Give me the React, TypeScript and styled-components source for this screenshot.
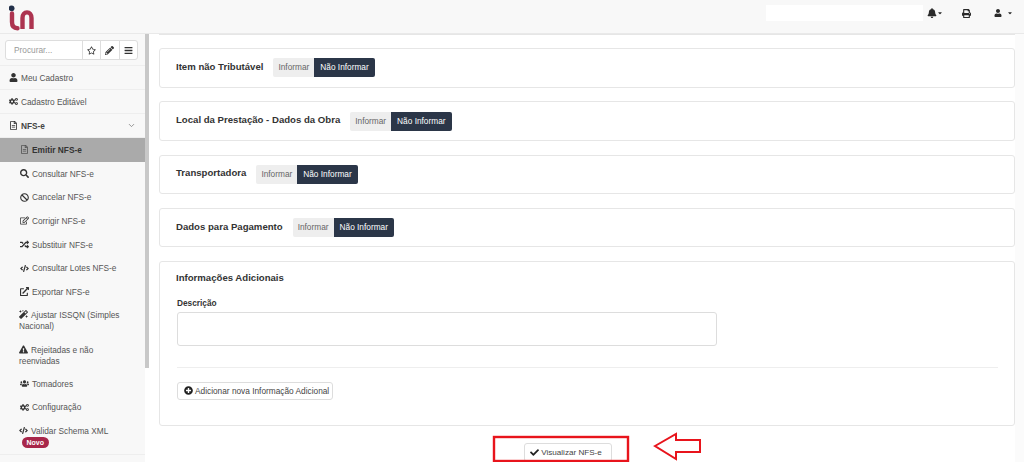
import React from "react";
import styled, { createGlobalStyle } from "styled-components";
import {
  FaUser, FaCogs, FaRegFileAlt, FaSearch, FaBan, FaRegEdit, FaRandom, FaCode,
  FaExternalLinkAlt, FaMagic, FaExclamationTriangle, FaUsers, FaBell, FaPrint,
  FaCaretDown, FaCheck, FaPlusCircle, FaRegStar, FaPencilAlt, FaBars,
} from "react-icons/fa";
import { ChevronDown } from "lucide-react";

const Global = createGlobalStyle`
  html, body { margin: 0; padding: 0; height: 462px; overflow: hidden; background: #fff; }
  body { font-family: "Liberation Sans", Arial, sans-serif; color: #333; }
  * { box-sizing: border-box; }
`;

const Page = styled.div`
  width: 1024px; height: 462px; display: flex; flex-direction: column; overflow: hidden; position: relative;
`;
const Header = styled.header`
  height: 34px; flex: none; background: #f8f8f8; border-bottom: 1px solid #e9e9e9;
  display: flex; align-items: flex-start; padding: 5px 0 0 9px;
`;
const Logo = styled.svg`
  width: 27px; height: 26px; flex: none;
`;
const HeaderRight = styled.div`
  margin-left: auto; display: flex; align-items: center; height: 16px;
`;
const HeaderInput = styled.div`
  width: 157px; height: 16px; background: #fff; margin-right: 4px;
`;
const TopIcon = styled.span<{ $w: number; $gap?: number }>`
  width: ${(p) => p.$w}px; display: flex; align-items: center; gap: ${(p) => p.$gap ?? 0}px; color: #2a2a2a;
`;
const Body = styled.div`
  flex: 1; display: flex; min-height: 0;
`;
const Sidebar = styled.aside`
  width: 145px; flex: none; background: #f8f8f8; height: 100%;
`;
const SearchRow = styled.div`
  height: 32px; padding: 6px 6px 0 5px; display: flex; border-bottom: 1px solid #eee;
`;
const SearchGroup = styled.div`
  display: flex; height: 20px; width: 133px; background: #fff; border: 1px solid #ddd; border-radius: 3px;
`;
const SearchInput = styled.div`
  width: 77px; padding-left: 8px; font-size: 8.3px; line-height: 18px; color: #999; border-right: 1px solid #ddd;
`;
const SearchButton = styled.div`
  flex: 1; display: flex; align-items: center; justify-content: center; color: #333; font-size: 9px;
  & + & { border-left: 1px solid #ddd; }
`;
const Item = styled.div`
  height: 24px; padding-left: 9px; display: flex; align-items: center; gap: 3px;
  font-size: 8.3px; color: #555; border-bottom: 1px solid #eee;
  svg { font-size: 9px; color: #333; flex: none; }
`;
const SectionLabel = styled.span`
  font-weight: 700; color: #444;
`;
const Caret = styled.span`
  margin-left: auto; margin-right: 9px; display: flex; svg { color: #777; }
`;
const SubItem = styled.div<{ $active?: boolean }>`
  height: 23.7px; padding-left: 20px; display: flex; align-items: center; gap: 3px;
  font-size: 8.3px; color: ${(p) => (p.$active ? "#333" : "#555")};
  font-weight: ${(p) => (p.$active ? 700 : 400)};
  background: ${(p) => (p.$active ? "#aaaaaa" : "transparent")};
  svg { font-size: 9px; color: ${(p) => (p.$active ? "#555" : "#333")}; flex: none; }
`;
const MultiItem = styled.div<{ $h: number; $top?: number; $last?: boolean }>`
  height: ${(p) => p.$h}px; padding: ${(p) => p.$top ?? 0}px 8px 0 19px; display: flex; flex-direction: column; justify-content: center;
  font-size: 8.3px; line-height: 11.6px; color: #555;
  border-bottom: ${(p) => (p.$last ? "1px solid #eee" : "0")};
  svg { font-size: 9px; color: #333; vertical-align: -1px; margin-right: 3px; }
`;
const Badge = styled.span`
  align-self: flex-start; margin-left: 3px; height: 11px; padding: 0 4.5px; border-radius: 5.5px; background: #a8274a;
  color: #fff; font-size: 7px; font-weight: 700; line-height: 11px;
`;
const ScrollTrack = styled.div`
  width: 4px; flex: none; height: 100%; background: #fff;
`;
const ScrollThumb = styled.div`
  width: 4px; height: 334px; background: #c8c8c8;
`;
const Main = styled.main`
  flex: 1; min-width: 0; display: flex; padding-left: 10px; height: 100%;
`;
const Column = styled.div`
  width: 856px; flex: none; display: flex; flex-direction: column;
`;
const Gutter = styled.div`
  flex: 1; background: #fbfbfb;
`;
const TopStub = styled.div`
  height: 1px; background: #e6e6e6; margin-bottom: 13px;
`;
const Card = styled.section`
  height: 39.5px; flex: none; border: 1px solid #e6e6e6; border-radius: 3px; background: #fff; margin-bottom: 13.83px;
  padding: 0 16px; display: flex; align-items: center; gap: 10px;
`;
const CardTitle = styled.h3`
  margin: 0 0 3px; font-size: 9.6px; font-weight: 700; color: #333;
`;
const Toggle = styled.div`
  display: flex; height: 19px; font-size: 8.3px; line-height: 19px;
`;
const ToggleOff = styled.span`
  padding: 0 5px; background: #eeeeee; color: #666; border-radius: 2px 0 0 2px;
`;
const ToggleOn = styled.span`
  padding: 0 6px; background: #2b3648; color: #fff; border-radius: 0 2px 2px 0;
`;
const BigCard = styled.section`
  height: 165px; flex: none; border: 1px solid #e6e6e6; border-radius: 3px; background: #fff; padding: 10px 16px 0 17px;
`;
const BigTitle = styled.h3`
  margin: 0 0 0 -1px; font-size: 9.6px; line-height: 12px; font-weight: 700; color: #333;
`;
const FieldLabel = styled.label`
  display: block; margin-top: 14px; font-size: 8.3px; line-height: 10px; font-weight: 700; color: #333;
`;
const TextArea = styled.div`
  margin-top: 4px; width: 540px; height: 34px; border: 1px solid #ddd; border-radius: 3px; background: #fff;
`;
const Divider = styled.hr`
  margin: 21px 0 13px; border: 0; border-top: 1px solid #eee;
`;
const OutlineButton = styled.button`
  display: inline-flex; align-items: center; gap: 2px; height: 18px; padding: 0 3px 0 6px; margin: 0;
  background: #fff; border: 1px solid #ddd; border-radius: 3px; color: #444; font: 8.3px "Liberation Sans", Arial, sans-serif;
  svg { font-size: 9px; color: #222; }
`;
const SubmitButton = styled(OutlineButton)`
  height: 19px; font-size: 8.1px; padding: 0 9px 0 5px;
`;
const Footer = styled.div`
  display: flex; justify-content: center; padding: 16.7px 38px 0 0;
`;
const Highlight = styled.svg`
  position: absolute; left: 0; top: 0; pointer-events: none;
`;

const subs = [
  { icon: <FaSearch />, label: "Consultar NFS-e" },
  { icon: <FaBan />, label: "Cancelar NFS-e" },
  { icon: <FaRegEdit />, label: "Corrigir NFS-e" },
  { icon: <FaRandom />, label: "Substituir NFS-e" },
  { icon: <FaCode />, label: "Consultar Lotes NFS-e" },
  { icon: <FaExternalLinkAlt />, label: "Exportar NFS-e" },
];
const sections = ["Item não Tributável", "Local da Prestação - Dados da Obra", "Transportadora", "Dados para Pagamento"];

export default function App() {
  return (
    <Page>
      <Global />
      <Header>
        <Logo viewBox="0 0 27 26">
          <circle cx="2.6" cy="3.3" r="2.9" fill="#22304a" />
          <path d="M3 8.5v8.5c0 4 2 6.2 5.5 6.2" fill="none" stroke="#ad3450" strokeWidth="4.4" strokeLinecap="round" />
          <path d="M13.5 24V13c0-3.2 2-5.6 4.5-5.6s4.5 2.4 4.5 5.6v11" fill="none" stroke="#ad3450" strokeWidth="4.4" />
        </Logo>
        <HeaderRight>
          <HeaderInput />
          <TopIcon $w={35}><FaBell size={10} /><FaCaretDown size={6} /></TopIcon>
          <TopIcon $w={32}><FaPrint size={9} /></TopIcon>
          <TopIcon $w={30} $gap={5}><FaUser size={8} /><FaCaretDown size={6} /></TopIcon>
        </HeaderRight>
      </Header>
      <Body>
        <Sidebar>
          <SearchRow>
            <SearchGroup>
              <SearchInput>Procurar...</SearchInput>
              <SearchButton><FaRegStar /></SearchButton>
              <SearchButton><FaPencilAlt /></SearchButton>
              <SearchButton><FaBars /></SearchButton>
            </SearchGroup>
          </SearchRow>
          <Item><FaUser />Meu Cadastro</Item>
          <Item><FaCogs />Cadastro Editável</Item>
          <Item>
            <FaRegFileAlt />
            <SectionLabel>NFS-e</SectionLabel>
            <Caret><ChevronDown size={9} /></Caret>
          </Item>
          <SubItem $active><FaRegFileAlt />Emitir NFS-e</SubItem>
          {subs.map((s) => (
            <SubItem key={s.label}>{s.icon}{s.label}</SubItem>
          ))}
          <MultiItem $h={35}><span><FaMagic />Ajustar ISSQN (Simples<br />Nacional)</span></MultiItem>
          <MultiItem $h={33} $top={2}><span><FaExclamationTriangle />Rejeitadas e não<br />reenviadas</span></MultiItem>
          <SubItem><FaUsers />Tomadores</SubItem>
          <SubItem><FaCogs />Configuração</SubItem>
          <MultiItem $h={36} $top={1} $last>
            <span><FaCode />Validar Schema XML</span>
            <Badge>Novo</Badge>
          </MultiItem>
        </Sidebar>
        <ScrollTrack><ScrollThumb /></ScrollTrack>
        <Main>
          <Column>
            <TopStub />
            {sections.map((t) => (
              <Card key={t}>
                <CardTitle>{t}</CardTitle>
                <Toggle>
                  <ToggleOff>Informar</ToggleOff>
                  <ToggleOn>Não Informar</ToggleOn>
                </Toggle>
              </Card>
            ))}
            <BigCard>
              <BigTitle>Informações Adicionais</BigTitle>
              <FieldLabel>Descrição</FieldLabel>
              <TextArea />
              <Divider />
              <OutlineButton><FaPlusCircle />Adicionar nova Informação Adicional</OutlineButton>
            </BigCard>
            <Footer>
              <SubmitButton><FaCheck />Visualizar NFS-e</SubmitButton>
            </Footer>
          </Column>
          <Gutter />
        </Main>
      </Body>
      <Highlight width="1024" height="462" viewBox="0 0 1024 462">
        <rect x="494" y="437" width="134" height="24" fill="none" stroke="#e8141c" strokeWidth="2.4" />
        <path d="M655 446L676 434V440H700V452H676V459Z" fill="#fff" stroke="#e8141c" strokeWidth="2" />
      </Highlight>
    </Page>
  );
}
